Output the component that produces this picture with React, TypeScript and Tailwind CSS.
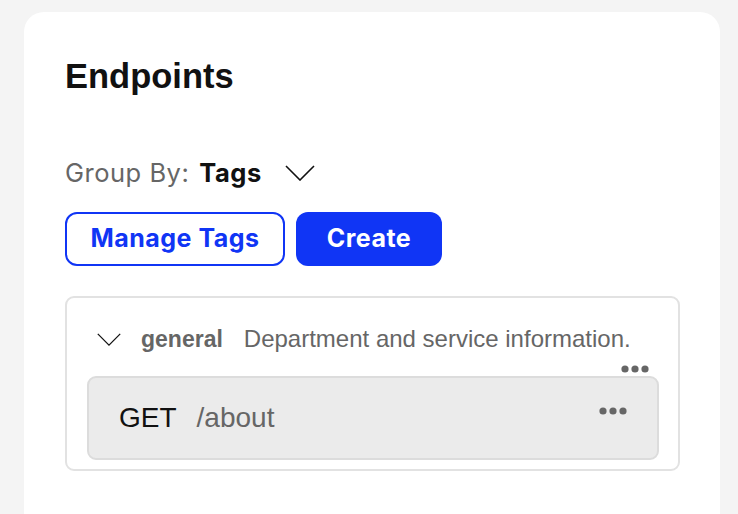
import React from "react";

function Chevron({ className }: { className?: string }) {
  return (
    <svg className={className} viewBox="0 0 30 16" fill="none">
      <path d="M1 1 L15 15 L29 1" stroke="#111" strokeWidth="1.6" />
    </svg>
  );
}

function Dots() {
  return (
    <svg width="28" height="8" viewBox="0 0 28 8">
      <circle cx="4" cy="4" r="3.6" fill="#666" />
      <circle cx="14" cy="4" r="3.6" fill="#666" />
      <circle cx="24" cy="4" r="3.6" fill="#666" />
    </svg>
  );
}

export default function App() {
  return (
    <div className="min-h-screen bg-[#f4f4f4] pt-3 pl-6 pr-[18px] overflow-hidden">
      <div className="bg-white rounded-t-[20px] min-h-[560px] pl-[41px] pr-[40px] pt-[44px]">
        <h1 className="text-[34.5px] leading-[40px] font-bold text-[#111] font-['Liberation_Sans',Arial,sans-serif]">
          Endpoints
        </h1>
        <div className="mt-[61px] h-8 flex items-center font-['Inter',sans-serif] text-[25.5px] tracking-[0.02em]">
          <span className="text-[#666]">Group By:</span>
          <span className="ml-[10px] font-bold text-[#111]">Tags</span>
          <Chevron className="ml-[23px] w-[30px] h-4" />
        </div>
        <div className="mt-[23px] flex gap-[11px] font-['Inter',sans-serif] text-[25px] tracking-[0.02em] font-bold">
          <button className="h-[54px] w-[220px] rounded-[12px] border-2 border-[#1035f5] text-[#1035f5] bg-white">
            Manage Tags
          </button>
          <button className="h-[54px] w-[146px] rounded-[12px] bg-[#1035f5] text-white">
            Create
          </button>
        </div>
        <div className="mt-[30px] border-2 border-[#e2e2e2] rounded-[9px] pl-[20px] pr-[19px] pb-[9px] font-['Liberation_Sans',Arial,sans-serif]">
          <div className="h-[44px] mt-[19px] flex items-center">
            <Chevron className="ml-[10px] w-[24px] h-[13px]" />
            <span className="ml-[20px] font-bold text-[#666] text-[23px]">general</span>
            <span className="ml-[21px] text-[#666] text-[24px]">Department and service information.</span>
          </div>
          <div className="flex justify-end pr-[10px] h-[15px] items-center">
            <Dots />
          </div>
          <div className="h-[84px] bg-[#ebebeb] border-2 border-[#dcdcdc] rounded-[9px] flex pl-[30px] pr-[30px] text-[28px]">
            <div className="flex items-center">
              <span className="text-[#111]">GET</span>
              <span className="ml-[20px] text-[#666]">/about</span>
            </div>
            <div className="ml-auto pt-[29px]">
              <Dots />
            </div>
          </div>
        </div>
      </div>
    </div>
  );
}
